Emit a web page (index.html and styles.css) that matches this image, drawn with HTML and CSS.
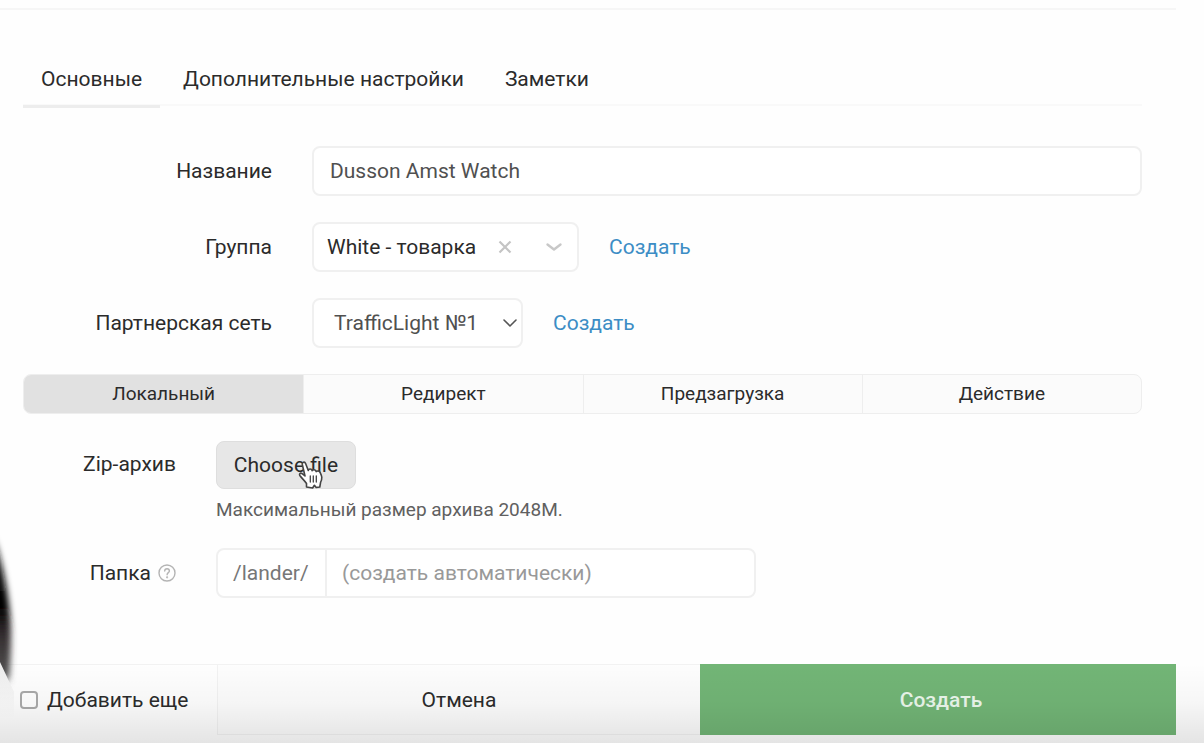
FILE: index.html
```html
<!DOCTYPE html>
<html lang="ru">
<head>
<meta charset="utf-8">
<meta name="viewport" content="width=device-width, initial-scale=1">
<title>Dusson Amst Watch</title>
<link rel="stylesheet" href="styles.css">
</head>
<body>
<form class="dialog">
  <main class="content">
    <nav class="tabs">
      <button type="button" class="tab tab-active">Основные</button>
      <button type="button" class="tab">Дополнительные настройки</button>
      <button type="button" class="tab">Заметки</button>
    </nav>

    <div class="fields">
      <div class="row">
        <label class="label" for="name">Название</label>
        <input class="box text-input" id="name" type="text" value="Dusson Amst Watch">
      </div>
      <div class="row">
        <label class="label" for="group">Группа</label>
        <div class="control">
          <div class="picker picker-group">
            <select class="box select select-group" id="group"><option>White - товарка</option></select>
            <button type="button" class="clear" aria-label="Очистить">
              <svg width="14" height="14" viewBox="0 0 14 14" fill="none" stroke="#c4c4c4" stroke-width="2.2"><path d="M1.5 1.5l11 11M12.5 1.5l-11 11"/></svg>
            </button>
            <svg class="chevron chevron-group" width="18" height="12" viewBox="0 0 18 12" fill="none" stroke="#c8c8c8" stroke-width="2.4" stroke-linecap="round" stroke-linejoin="round"><path d="M2.5 3.500l6.500 5 6.500-5"/></svg>
          </div>
          <a class="link" href="#group">Создать</a>
        </div>
      </div>
      <div class="row">
        <label class="label" for="network">Партнерская сеть</label>
        <div class="control">
          <div class="picker picker-network">
            <select class="box select select-network" id="network"><option>TrafficLight №1</option></select>
            <svg class="chevron chevron-network" width="16" height="12" viewBox="0 0 16 12" fill="none" stroke="#555" stroke-width="1.6" stroke-linecap="round" stroke-linejoin="round"><path d="M2 3l6 6 6-6"/></svg>
          </div>
          <a class="link" href="#network">Создать</a>
        </div>
      </div>
    </div>

    <div class="segments">
      <button type="button" class="segment segment-active">Локальный</button>
      <button type="button" class="segment">Редирект</button>
      <button type="button" class="segment">Предзагрузка</button>
      <button type="button" class="segment">Действие</button>
    </div>

    <div class="fields fields-local">
      <div class="row row-local row-archive">
        <label class="label" for="archive">Zip-архив</label>
        <div class="upload">
          <div class="upload-action">
            <button type="button" class="choose" id="archive">Choose file</button>
            <svg class="pointer" width="26" height="30" viewBox="0 0 26 30" fill="#fff" stroke="#444" stroke-width="1.6" stroke-linejoin="round" stroke-linecap="round"><path d="M8.5 28v-3.5C7 22 4 19.500 1.800 16.500 1 15 2.200 13.700 3.800 14.400L7 17 4.300 5.500C3.900 3 6.700 2.200 7.600 4.500L10.300 11.500C10.500 9.500 13.500 9.300 14.200 11.700 15 10.200 17.600 10.300 18.200 12.600 19.300 11.400 21.600 11.900 22.200 13.700 24 17.500 24.500 19 22.600 23.300L21.800 28l-3.600.500-1.800-2.200-1.800 2.700z"/><path d="M12.300 17v6M15.300 17v6M18.300 17v6" fill="none" stroke-width="1.300"/></svg>
          </div>
          <p class="hint">Максимальный размер архива 2048M.</p>
        </div>
      </div>
      <div class="row row-local">
        <label class="label label-help" for="folder">Папка
          <svg class="help" width="18" height="18" viewBox="0 0 18 18" fill="none" stroke="#b4b4b4" stroke-width="1.400" stroke-linecap="round"><circle cx="9" cy="9" r="8"/><path d="M6.700 7.100C6.700 4 11.400 4.100 11.400 7c0 1.600-2.300 1.700-2.300 3.700"/><circle cx="9.100" cy="13.300" r=".400"/></svg>
        </label>
        <div class="box folder">
          <span class="prefix">/lander/</span>
          <input class="folder-input" id="folder" type="text" placeholder="(создать автоматически)">
        </div>
      </div>
    </div>
  </main>

  <footer class="footer">
    <label class="again"><input class="check" type="checkbox">Добавить еще</label>
    <button type="button" class="action cancel">Отмена</button>
    <button type="submit" class="action create">Создать</button>
  </footer>
</form>

<svg class="camera" width="28" height="210" viewBox="0 0 28 210" aria-hidden="true">
  <defs>
    <filter id="soft" x="-100%" y="-20%" width="300%" height="140%"><feGaussianBlur stdDeviation="3 4"/></filter>
    <linearGradient id="shade" x1="0" y1="0" x2="0" y2="1"><stop offset="0" stop-color="#222"/><stop offset=".5" stop-color="#000"/><stop offset=".7" stop-color="#342e30"/><stop offset="1" stop-color="#555"/></linearGradient>
    <linearGradient id="sleeve" x1="0" y1="0" x2="0" y2="1"><stop offset="0" stop-color="#ececec"/><stop offset="1" stop-color="#fefefe"/></linearGradient>
  </defs>
  <path d="M-12 22L-3 40C3 60 10 90 11 125 11 145 10 165 9 172L-12 172z" fill="url(#shade)" filter="url(#soft)"/>
  <path d="M0 154L14 184V210H0z" fill="url(#sleeve)"/>
</svg>
<div class="bottom-shade"></div>
</body>
</html>
```
FILE: styles.css
```css
* {
  box-sizing: border-box;
}

body {
  margin: 0;
  min-height: 100vh;
  position: relative;
  overflow-x: hidden;
  background: #fefefe;
  color: #2b2b2b;
  font-family: Roboto, "Liberation Sans", sans-serif;
  font-size: 21px;
  line-height: 24px;
}

button,
input,
select {
  margin: 0;
  font: inherit;
  color: inherit;
}

button {
  padding: 0;
  border: 0;
  background: none;
}

.dialog {
  margin-right: 28px;
  padding: 8px 0;
}

.content {
  padding: 42px 34px 66px 23px;
  border-top: 2px solid #f6f6f6;
}

.tabs {
  display: flex;
  gap: 5px;
  height: 54px;
  border-bottom: 2px solid #f9f9f9;
}

.tab {
  height: 56px;
  padding: 0 18px;
  border-bottom: 3px solid transparent;
}

.tab-active {
  border-color: #ededed;
}

.fields {
  display: flex;
  flex-direction: column;
  gap: 26px;
  padding: 40px 0 26px;
}

.row {
  display: grid;
  grid-template-columns: 249px 1fr;
  column-gap: 40px;
  align-items: center;
}

.label {
  text-align: right;
}

.box {
  height: 50px;
  border: 2px solid #f0f0f0;
  border-radius: 8px;
  background: #fff;
}

.text-input {
  width: 100%;
  padding: 0 16px;
  color: #505050;
}

.control {
  display: flex;
  align-items: center;
  gap: 30px;
}

.picker {
  position: relative;
}

.picker-group {
  width: 267px;
}

.picker-network {
  width: 211px;
}

.select {
  display: block;
  width: 100%;
  appearance: none;
}

.select-group {
  padding: 0 96px 0 13px;
}

.select-network {
  padding: 0 40px 0 20px;
  color: #505050;
}

.clear {
  position: absolute;
  top: 18px;
  right: 67px;
  width: 14px;
  height: 14px;
}

.clear svg {
  display: block;
}

.chevron {
  position: absolute;
  top: 19px;
  pointer-events: none;
}

.chevron-group {
  right: 16px;
}

.chevron-network {
  right: 5px;
}

.link {
  color: #3c8dc5;
  text-decoration: none;
}

.segments {
  display: grid;
  grid-template-columns: repeat(4, 1fr);
  height: 40px;
  overflow: hidden;
  border: 1px solid #eee;
  border-radius: 8px;
  background: #fbfbfb;
  font-size: 19px;
}

.segment + .segment {
  border-left: 1px solid #eee;
}

.segment-active {
  background: #e1e1e1;
}

.fields-local {
  padding: 27px 0 0;
}

.row-local {
  grid-template-columns: 153px 1fr;
}

.row-archive {
  align-items: start;
}

.row-archive .label {
  line-height: 46px;
}

.upload-action {
  position: relative;
  width: 140px;
}

.choose {
  display: block;
  width: 100%;
  height: 48px;
  border: 1px solid #dedede;
  border-radius: 8px;
  background: #e7e7e7;
}

.pointer {
  position: absolute;
  top: 18px;
  left: 82px;
}

.hint {
  margin: 9px 0 0;
  color: #606060;
  font-size: 19px;
  line-height: 24px;
}

.label-help {
  display: flex;
  justify-content: flex-end;
  align-items: center;
  gap: 7px;
}

.folder {
  display: flex;
  width: 100%;
  max-width: 540px;
}

.prefix {
  width: 109px;
  padding-left: 15px;
  border-right: 2px solid #f0f0f0;
  color: #777;
  line-height: 46px;
}

.folder-input {
  flex: 1;
  min-width: 0;
  padding: 0 15px;
  border: 0;
  background: none;
}

.folder-input::placeholder {
  color: #999;
  opacity: 1;
}

.footer {
  display: grid;
  grid-template-columns: 217px 483fr 476fr;
  height: 71px;
}

.again {
  display: flex;
  align-items: center;
  gap: 9px;
  padding-left: 20px;
  border-top: 1px solid #f2f2f2;
}

.check {
  width: 18px;
  height: 18px;
  border: 2px solid #aaa;
  border-radius: 4px;
  background: #fff;
  appearance: none;
}

.check:checked {
  background: #3c8dc5;
}

.cancel {
  border: 1px solid #f2f2f2;
  border-right: 0;
  background: #fdfdfd;
}

.create {
  padding-left: 6px;
  background: #72b576;
  color: #ebf7ec;
  font-weight: 500;
}

.camera {
  position: absolute;
  top: 508px;
  left: 0;
}

.bottom-shade {
  position: absolute;
  right: 0;
  bottom: 0;
  left: 0;
  height: 80px;
  background: linear-gradient(rgba(0, 0, 0, 0), rgba(0, 0, 0, 0.03) 50%, rgba(0, 0, 0, 0.1));
  pointer-events: none;
}
```
